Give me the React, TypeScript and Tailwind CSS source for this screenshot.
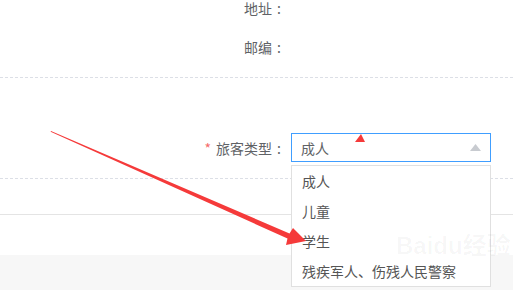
import React from "react";

function Colon() {
  return <span className="inline-block w-[14px] text-center">:</span>;
}

export default function App() {
  const items = ["成人", "儿童", "学生", "残疾军人、伤残人民警察"];
  return (
    <div className="relative w-[513px] h-[290px] overflow-hidden bg-white font-['Noto_Sans_CJK_SC','Noto_Sans',sans-serif] text-[14px] text-[#606266]">
      <div className="flex flex-col h-full">
        <div className="flex h-[16px] items-center">
          <div className="w-[286px] text-right leading-[16px]">
            地址<Colon />
          </div>
        </div>
        <div className="mt-[23px] flex h-[16px] items-center">
          <div className="w-[286px] text-right leading-[16px]">
            邮编<Colon />
          </div>
        </div>
        <div className="mt-[22px] border-t border-dashed border-[#dcdfe6]" />
        <div className="pt-[55px] pb-[16px] flex items-center">
          <div className="w-[286px] text-right leading-none">
            <span className="text-[#f56c6c] mr-[5px]">*</span>旅客类型<Colon />
          </div>
          <div className="ml-[5px] w-[200px] h-[29px] border border-[#409eff] flex items-center pl-[9px] pr-[9px] justify-between">
            <span className="leading-none text-[#606266]">成人</span>
            <svg width="11" height="7" viewBox="0 0 11 7">
              <polygon points="5.5,0 11,7 0,7" fill="#c8cbd0" />
            </svg>
          </div>
        </div>
        <div className="border-t border-dashed border-[#dcdfe6]" />
        <div className="mt-[35px] border-t border-[#e4e4e4]" />
        <div className="h-[40px]" />
        <div className="flex-1 bg-[#f7f7f7]" />
      </div>

      <div className="absolute left-[291px] top-[165px] w-[200px] border border-[#e0e0e0] bg-white">
        {items.map((t) => (
          <div key={t} className="h-[30px] flex items-center pl-[10px] leading-none text-[#555]">
            {t}
          </div>
        ))}
      </div>

      <div className="absolute left-[396px] top-[234px] text-[24px] font-bold leading-none text-[rgba(0,0,0,0.035)] font-['Liberation_Sans','Noto_Sans_CJK_SC',sans-serif] pointer-events-none">
        Baidu经验
      </div>

      <svg className="absolute left-0 top-0 pointer-events-none" width="513" height="290" viewBox="0 0 513 290">
        <polygon
          points="51,131 289.5,233.5 293,228 306,241 286,245 287.5,238.5 50.6,131.8"
          fill="#f53a3a"
        />
        <polygon points="361,134 355,142 365,142" fill="#f53a3a" />
      </svg>
    </div>
  );
}
